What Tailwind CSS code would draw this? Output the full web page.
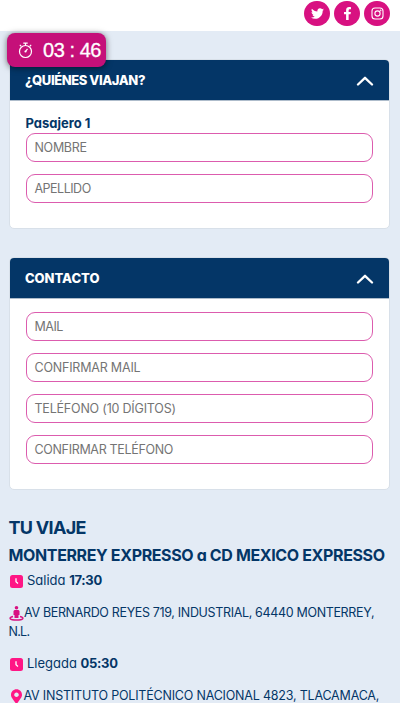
<!DOCTYPE html>
<html lang="es">
<head>
<meta charset="utf-8">
<title>Tu viaje</title>
<script src="https://cdn.jsdelivr.net/npm/@tailwindcss/browser@4"></script>
</head>
<body class="h-[703px] overflow-hidden bg-[#e3ebf5] font-['Inter',sans-serif] text-[13px] text-[#043667] [font-feature-settings:'cv11']">
<header class="flex h-[31px] justify-end gap-[4px] bg-white pt-[1px] pr-[10px]">
  <a class="flex h-[25px] w-[26px] items-center justify-center rounded-full bg-[#d81181] text-white"><svg class="h-[13px] w-[13px]" viewBox="0 0 512 512" fill="currentColor"><path d="M459.4 151.7c.3 4.5.3 9.100.3 13.600 0 138.700-105.600 298.600-298.600 298.600-59.500 0-114.700-17.200-161.100-47.100 8.400 1 16.600 1.300 25.300 1.300 49.100 0 94.200-16.600 130.300-44.800-46.100-1-84.800-31.200-98.100-72.800 6.500 1 13 1.600 19.800 1.600 9.400 0 18.800-1.300 27.600-3.600-48.100-9.700-84.100-52-84.100-103v-1.300c14 7.800 30.200 12.700 47.400 13.300-28.300-18.800-46.800-51-46.800-87.400 0-19.500 5.200-37.400 14.300-53 51.700 63.700 129.300 105.300 216.400 109.800-1.600-7.800-2.600-15.900-2.600-24 0-57.800 46.800-104.900 104.900-104.900 30.200 0 57.500 12.700 76.700 33.100 23.700-4.500 46.500-13.300 66.600-25.300-7.800 24.400-24.400 44.800-46.100 57.800 21.100-2.300 41.600-8.100 60.400-16.200-14.300 20.800-32.200 39.300-52.600 54.300z"/></svg></a>
  <a class="flex h-[25px] w-[26px] items-center justify-center rounded-full bg-[#d81181] text-white"><svg class="h-[13px] w-[13px]" viewBox="0 0 320 512" fill="currentColor"><path d="M279.100 288l14.300-92.700h-89v-60.100c0-25.300 12.500-50 52.300-50h40.400V6.300S260.500 0 225.400 0C152.200 0 104.400 44.400 104.400 124.700v70.600H23V288h81.400v224h100V288z"/></svg></a>
  <a class="flex h-[25px] w-[26px] items-center justify-center rounded-full bg-[#d81181] text-white"><svg class="h-[13px] w-[13px]" viewBox="0 0 13 13" fill="none" stroke="currentColor" stroke-width="1.1"><rect x="1" y="1" width="11" height="11" rx="3"/><circle cx="6.500" cy="6.500" r="2.600"/><circle cx="9.600" cy="3.400" r=".3"/></svg></a>
</header>

<div class="absolute top-[33px] left-[7px] flex h-[34px] w-[99px] items-center rounded-[8px] bg-[#c51079] pl-[11px] text-white shadow-[0_1px_6px_rgba(0,0,0,0.55)]">
  <svg class="h-[17px] w-[15px] shrink-0" viewBox="0 0 15 17" fill="none" stroke="currentColor" stroke-width="1.2"><circle cx="7.500" cy="9.500" r="6"/><path d="M7.500 3.500V1.200M5.300 1.200h4.400M1.800 2.800l1.500 1.500M13.200 2.800l-1.500 1.500M7.500 9.500l2-2.700"/><circle cx="7.500" cy="9.500" r=".5"/></svg>
  <span class="ml-[10px] font-['Liberation_Sans',sans-serif] text-[20px] leading-[24px] tracking-[-0.45px] whitespace-pre [-webkit-text-stroke:0.3px_white]">03 : 46</span>
</div>

<main>
  <section class="mr-[10px] ml-[9px] mt-[28px] h-[170px] rounded-[5px] border border-[#d8e0e9] bg-white">
    <h2 class="flex h-[41px] items-center justify-between rounded-t-[4px] border-b border-[#aebccb] bg-[#043667] pr-[15px] pl-[15px] font-extrabold text-white"><span class="pt-[2px] tracking-[-0.42px]">¿QUIÉNES VIAJAN?</span>
      <svg class="mt-[2px] h-[10px] w-[18px]" viewBox="0 0 18 10" fill="none" stroke="currentColor" stroke-width="2.300" stroke-linecap="round" stroke-linejoin="round"><path d="M2 8.500l7-6.700 7 6.700"/></svg></h2>
    <div class="flex flex-col px-[16px] pt-[13px]">
      <h3 class="-ml-[0.5px] h-[19px] leading-[18px] font-bold">Pasajero 1</h3>
      <div class="flex flex-col gap-[12px] text-[12.5px] text-[#747474]">
        <div class="flex h-[29px] items-center rounded-[9px] border border-[#dc5cae] pt-[2px] pl-[7.5px]"><span class="tracking-[-0.3px]">NOMBRE</span></div>
        <div class="flex h-[29px] items-center rounded-[9px] border border-[#dc5cae] pt-[2px] pl-[7.5px]"><span class="tracking-[-0.5px]">APELLIDO</span></div>
      </div>
    </div>
  </section>

  <section class="mr-[10px] ml-[9px] mt-[28px] h-[233px] rounded-[5px] border border-[#d8e0e9] bg-white">
    <h2 class="flex h-[41px] items-center justify-between rounded-t-[4px] border-b border-[#aebccb] bg-[#043667] pr-[15px] pl-[15px] font-extrabold text-white"><span class="pt-[2px] tracking-[-0.05px]">CONTACTO</span>
      <svg class="mt-[2px] h-[10px] w-[18px]" viewBox="0 0 18 10" fill="none" stroke="currentColor" stroke-width="2.300" stroke-linecap="round" stroke-linejoin="round"><path d="M2 8.500l7-6.700 7 6.700"/></svg></h2>
    <div class="flex flex-col gap-[12px] px-[16px] pt-[13px] text-[12.5px] text-[#747474]">
      <div class="flex h-[29px] items-center rounded-[9px] border border-[#dc5cae] pt-[2px] pl-[7.5px]"><span class="tracking-[-0.5px]">MAIL</span></div>
      <div class="flex h-[29px] items-center rounded-[9px] border border-[#dc5cae] pt-[2px] pl-[7.5px]"><span class="tracking-[-0.2px]">CONFIRMAR MAIL</span></div>
      <div class="flex h-[29px] items-center rounded-[9px] border border-[#dc5cae] pt-[2px] pl-[7.5px]"><span class="tracking-[-0.2px]">TELÉFONO (10 DÍGITOS)</span></div>
      <div class="flex h-[29px] items-center rounded-[9px] border border-[#dc5cae] pt-[2px] pl-[7.5px]"><span class="tracking-[-0.33px]">CONFIRMAR TELÉFONO</span></div>
    </div>
  </section>

  <section class="pt-[24px] pl-[8.5px] whitespace-nowrap">
    <h2 class="h-[28px] text-[18px] leading-[27px] font-bold tracking-[-0.7px]">TU VIAJE</h2>
    <h3 class="h-[28px] text-[16px] leading-[27px] font-bold tracking-[-0.37px]">MONTERREY EXPRESSO a CD MEXICO EXPRESSO</h3>
    <p class="flex h-[22px] items-center"><svg class="mr-[4px] ml-[1.5px] h-[13px] w-[13px] shrink-0" viewBox="0 0 13 13"><rect width="13" height="13" rx="2.500" fill="#ff1685"/><path d="M6 3.300v3.500l2 1.700" fill="none" stroke="#fff" stroke-width="1.300"/></svg><span>Salida <b class="tracking-[-0.3px]">17:30</b></span></p>
    <p class="mt-[10px] flex h-[22px] items-center"><svg class="mt-px ml-[0.5px] h-[15px] w-[15px] shrink-0" viewBox="0 0 15 15" fill="#d81181"><circle cx="7.500" cy="1.800" r="1.800"/><path d="M5.500 4h4l1 1v4h-1v3h-4V9h-1V5z"/><path d="M4 10.500c-5 1.200-3.500 3.500 3.500 3.500s8.500-2.300 3.500-3.500" fill="none" stroke="#d81181" stroke-width="1.400"/></svg><span class="text-[12.5px] tracking-[-0.34px]">AV BERNARDO REYES 719, INDUSTRIAL, 64440 MONTERREY,</span></p>
    <p class="h-[19px] text-[12.5px] leading-[16px] tracking-[-0.7px]">N.L.</p>
    <p class="mt-[10px] flex h-[22px] items-center"><svg class="mr-[4px] ml-[1.5px] h-[13px] w-[13px] shrink-0" viewBox="0 0 13 13"><rect width="13" height="13" rx="2.500" fill="#ff1685"/><path d="M6 3.300v3.500l2 1.700" fill="none" stroke="#fff" stroke-width="1.300"/></svg><span>Llegada <b class="tracking-[-0.3px]">05:30</b></span></p>
    <p class="mt-[10px] flex h-[22px] items-center"><svg class="mt-[1px] mr-[2px] ml-[2px] h-[15px] w-[11px] shrink-0" viewBox="0 0 384 512" fill="#ff1685"><path d="M172.300 501.700C27 291 0 269.400 0 192 0 86 86 0 192 0s192 86 192 192c0 77.400-27 99-172.300 309.700-9.500 13.800-29.900 13.800-39.400 0zM192 272c44.200 0 80-35.800 80-80s-35.800-80-80-80-80 35.800-80 80 35.800 80 80 80z"/></svg><span class="text-[12.5px] tracking-[-0.2px]">AV INSTITUTO POLITÉCNICO NACIONAL 4823, TLACAMACA,</span></p>
  </section>
</main>
</body>
</html>
